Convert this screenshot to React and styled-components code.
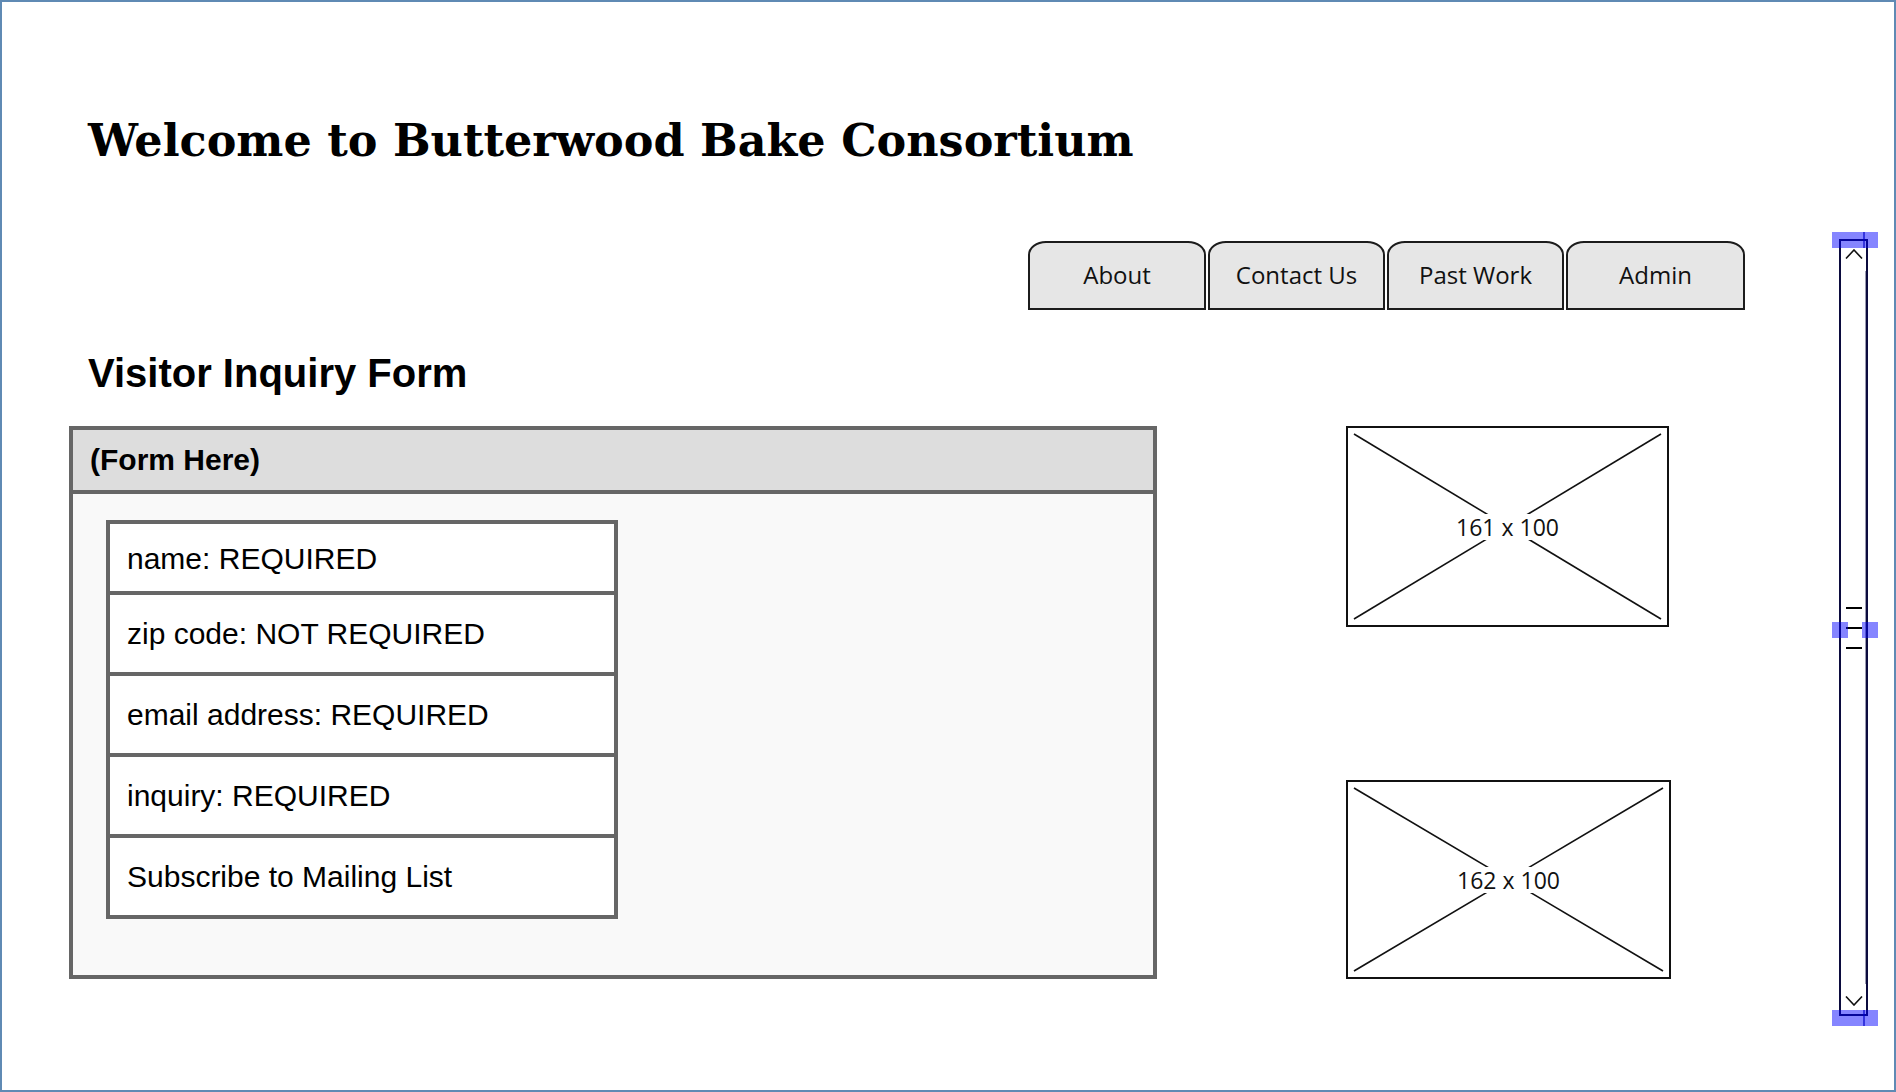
import React from "react";
import styled, { createGlobalStyle } from "styled-components";

const GlobalStyle = createGlobalStyle`
  html, body { margin: 0; padding: 0; background: #ffffff; }
  #root { width: 1896px; height: 1092px; }
  * { box-sizing: border-box; }
`;

const Frame = styled.div`
  width: 1896px;
  height: 1092px;
  border: 2px solid #5f8ab4;
  background: #ffffff;
  display: flex;
  overflow: hidden;
`;

const MainColumn = styled.div`
  flex: 1;
  display: flex;
  flex-direction: column;
  min-width: 0;
`;

const Title = styled.h1`
  margin: 112px 0 0 86px;
  font-family: "DejaVu Serif", "Liberation Serif", serif;
  font-weight: 700;
  font-size: 44.5px;
  line-height: 52px;
  color: #000;
  white-space: nowrap;
`;

const TabBar = styled.nav`
  margin-top: 75px;
  padding-right: 94px;
  display: flex;
  justify-content: flex-end;
  gap: 2px;
`;

const Tab = styled.div`
  width: ${(p) => p.$w}px;
  height: 69px;
  border: 2px solid #1c1c1c;
  border-radius: 18px 18px 0 0 / 14px 14px 0 0;
  background: #e6e6e6;
  display: flex;
  align-items: center;
  justify-content: center;
  font-family: "Open Sans", "DejaVu Sans", sans-serif;
  font-size: 24px;
  color: #111;
  padding-bottom: 2px;
`;

const Heading = styled.h2`
  margin: 40px 0 0 86px;
  font-family: "Liberation Sans", Arial, sans-serif;
  font-weight: 700;
  font-size: 40px;
  line-height: 46px;
  color: #000;
`;

const ContentRow = styled.div`
  margin: 30px 0 0 67px;
  display: flex;
  align-items: stretch;
`;

const Panel = styled.section`
  width: 1088px;
  border: 4px solid #666666;
  background: #f9f9f9;
  display: flex;
  flex-direction: column;
`;

const PanelHeader = styled.div`
  height: 64px;
  background: #dddddd;
  border-bottom: 4px solid #666666;
  padding-left: 17px;
  display: flex;
  align-items: center;
  font-family: "Liberation Sans", Arial, sans-serif;
  font-weight: 700;
  font-size: 30px;
  color: #000;
`;

const PanelBody = styled.div`
  padding: 26px 0 56px 33px;
`;

const FieldList = styled.ul`
  list-style: none;
  margin: 0;
  padding: 0;
  width: 512px;
  border: 4px solid #666666;
  background: #ffffff;
`;

const FieldRow = styled.li`
  height: ${(p) => (p.$first ? 67 : 81)}px;
  border-top: ${(p) => (p.$first ? "none" : "4px solid #666666")};
  display: flex;
  align-items: center;
  padding-left: 17px;
  padding-top: ${(p) => (p.$first ? 3 : 0)}px;
  font-family: "Liberation Sans", Arial, sans-serif;
  font-size: 30px;
  color: #000;
`;

const ImageColumn = styled.div`
  margin-left: 189px;
  display: flex;
  flex-direction: column;
  justify-content: space-between;
`;

const Placeholder = styled.div`
  position: relative;
  width: ${(p) => p.$w}px;
  height: ${(p) => p.$h}px;
  border: 2px solid #111;
  background: #fff;
  display: flex;
  align-items: center;
  justify-content: center;
`;

const Cross = styled.svg`
  position: absolute;
  inset: 0;
  width: 100%;
  height: 100%;
`;

const PlaceholderLabel = styled.span`
  position: relative;
  background: #fff;
  padding: 0 4px;
  line-height: 26px;
  font-family: "Open Sans", "DejaVu Sans", sans-serif;
  font-size: 23px;
  color: #111;
`;

const ScrollColumn = styled.div`
  width: 29px;
  height: 777px;
  margin: 237px 26px 0 0;
  position: relative;
  border: 2px solid #0b0b3e;
  background: #fff;
  display: flex;
  flex-direction: column;
  align-items: center;
  justify-content: space-between;
  padding: 8px 0 8px;
`;

const InnerTrack = styled.div`
  position: absolute;
  right: 0;
  top: 30px;
  bottom: 30px;
  width: 1px;
  background: #9a9ab0;
`;

const Grip = styled.div`
  display: flex;
  flex-direction: column;
  gap: 18px;
`;

const GripLine = styled.div`
  width: 16px;
  height: 2px;
  background: #000;
`;

const Handle = styled.div`
  position: absolute;
  left: ${(p) => p.$x}px;
  top: ${(p) => p.$y}px;
  width: ${(p) => p.$w}px;
  height: 16px;
  background: rgba(0, 0, 255, 0.48);
`;

const HandleSeam = styled.div`
  position: absolute;
  left: 31px;
  top: 0;
  width: 2px;
  height: 100%;
  background: rgba(0, 0, 200, 0.6);
`;

const ChevronUp = () => (
  <svg width="18" height="10" viewBox="0 0 18 10">
    <polyline points="1,9.5 9,1 17,9.5" fill="none" stroke="#111" strokeWidth="1.6" />
  </svg>
);

const ChevronDown = () => (
  <svg width="18" height="10" viewBox="0 0 18 10">
    <polyline points="1,0.5 9,9 17,0.5" fill="none" stroke="#111" strokeWidth="1.6" />
  </svg>
);

const ImageBox = ({ w, h, label }) => (
  <Placeholder $w={w} $h={h}>
    <Cross viewBox={`0 0 ${w - 4} ${h - 4}`} preserveAspectRatio="none">
      <line x1="6" y1="6" x2={w - 10} y2={h - 10} stroke="#111" strokeWidth="1.6" />
      <line x1={w - 10} y1="6" x2="6" y2={h - 10} stroke="#111" strokeWidth="1.6" />
    </Cross>
    <PlaceholderLabel>{label}</PlaceholderLabel>
  </Placeholder>
);

const tabs = [
  { label: "About", w: 178 },
  { label: "Contact Us", w: 177 },
  { label: "Past Work", w: 177 },
  { label: "Admin", w: 179 },
];

const fields = [
  "name: REQUIRED",
  "zip code: NOT REQUIRED",
  "email address: REQUIRED",
  "inquiry: REQUIRED",
  "Subscribe to Mailing List",
];

export default function App() {
  return (
    <>
      <GlobalStyle />
      <Frame>
        <MainColumn>
          <Title>Welcome to Butterwood Bake Consortium</Title>
          <TabBar>
            {tabs.map((t) => (
              <Tab key={t.label} $w={t.w}>
                {t.label}
              </Tab>
            ))}
          </TabBar>
          <Heading>Visitor Inquiry Form</Heading>
          <ContentRow>
            <Panel>
              <PanelHeader>(Form Here)</PanelHeader>
              <PanelBody>
                <FieldList>
                  {fields.map((f, i) => (
                    <FieldRow key={f} $first={i === 0}>
                      {f}
                    </FieldRow>
                  ))}
                </FieldList>
              </PanelBody>
            </Panel>
            <ImageColumn>
              <ImageBox w={323} h={201} label="161 x 100" />
              <ImageBox w={325} h={199} label="162 x 100" />
            </ImageColumn>
          </ContentRow>
        </MainColumn>
        <ScrollColumn>
          <InnerTrack />
          <ChevronUp />
          <Grip>
            <GripLine />
            <GripLine />
            <GripLine />
          </Grip>
          <ChevronDown />
          <Handle $x={-9} $y={-9} $w={46}>
            <HandleSeam />
          </Handle>
          <Handle $x={-9} $y={381} $w={16} />
          <Handle $x={21} $y={381} $w={16} />
          <Handle $x={-9} $y={769} $w={46}>
            <HandleSeam />
          </Handle>
        </ScrollColumn>
      </Frame>
    </>
  );
}
